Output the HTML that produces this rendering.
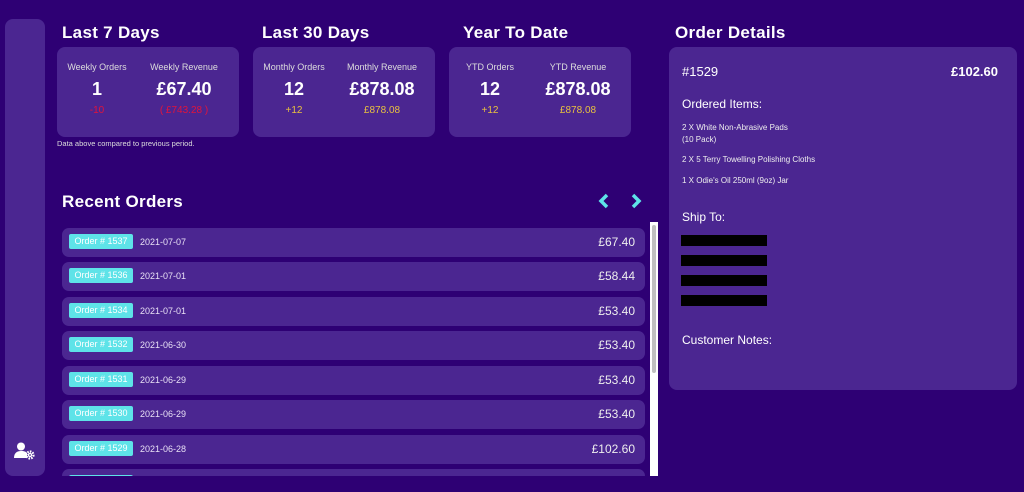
<!DOCTYPE html>
<html><head><style>
*{margin:0;padding:0;box-sizing:border-box}
body{width:1024px;height:492px;background:#2e0074;font-family:"Liberation Sans",sans-serif;color:#fff;position:relative;overflow:hidden}
.a{position:absolute}
.card{background:#4b2691;border-radius:8px}
h2{position:absolute;font-size:17px;font-weight:bold;letter-spacing:0.3px}
.lbl{font-size:9px;color:#ddd;text-align:center;position:absolute;width:90px}
.big{font-size:18px;font-weight:bold;text-align:center;position:absolute;width:90px}
.sub{font-size:10px;text-align:center;position:absolute;width:90px}
.row{position:absolute;left:62px;width:583px;height:29px;background:#4b2691;border-radius:7px}
.badge{position:absolute;left:7px;top:6px;width:64px;height:15px;background:#5ee3e8;border-radius:2px;font-size:9px;color:#fff;text-align:center;line-height:15px}
.date{position:absolute;left:78px;top:9px;font-size:9px;color:#e8e0f5}
.amt{position:absolute;right:10px;top:7px;font-size:12px;color:#eee}
.blk{position:absolute;left:681px;width:86px;height:11px;background:#000}
</style></head><body>
<div class="a card" style="left:5px;top:19px;width:40px;height:457px"></div>
<svg class="a" style="left:14px;top:442px" width="22" height="18" viewBox="0 0 22 18"><circle cx="7" cy="4.5" r="4" fill="#fff"/><path d="M0 16c0-5 3-7 7-7s5 1 6 2v5z" fill="#fff"/><circle cx="16" cy="13" r="3.5" fill="none" stroke="#fff" stroke-width="2.2" stroke-dasharray="1.6 1.1"/><circle cx="16" cy="13" r="2.2" fill="#fff"/><circle cx="16" cy="13" r="0.9" fill="#4b2691"/></svg>

<h2 style="left:62px;top:23px">Last 7 Days</h2>
<h2 style="left:262px;top:23px">Last 30 Days</h2>
<h2 style="left:463px;top:23px">Year To Date</h2>
<h2 style="left:675px;top:23px">Order Details</h2>

<div class="a card" style="left:57px;top:47px;width:182px;height:90px">
<div class="lbl" style="left:-5px;top:15px">Weekly Orders</div><div class="lbl" style="left:82px;top:15px">Weekly Revenue</div>
<div class="big" style="left:-5px;top:32px">1</div><div class="big" style="left:82px;top:32px">£67.40</div>
<div class="sub" style="left:-5px;top:58px;color:#e0143c">-10</div><div class="sub" style="left:82px;top:58px;color:#e0143c">( £743.28 )</div>
</div>
<div class="a" style="left:57px;top:139px;font-size:7.5px;color:#ddd">Data above compared to previous period.</div>
<div class="a card" style="left:253px;top:47px;width:182px;height:90px">
<div class="lbl" style="left:-4px;top:15px">Monthly Orders</div><div class="lbl" style="left:84px;top:15px">Monthly Revenue</div>
<div class="big" style="left:-4px;top:32px">12</div><div class="big" style="left:84px;top:32px">£878.08</div>
<div class="sub" style="left:-4px;top:58px;color:#e8c040">+12</div><div class="sub" style="left:84px;top:58px;color:#e8c040">£878.08</div>
</div>
<div class="a card" style="left:449px;top:47px;width:182px;height:90px">
<div class="lbl" style="left:-4px;top:15px">YTD Orders</div><div class="lbl" style="left:84px;top:15px">YTD Revenue</div>
<div class="big" style="left:-4px;top:32px">12</div><div class="big" style="left:84px;top:32px">£878.08</div>
<div class="sub" style="left:-4px;top:58px;color:#e8c040">+12</div><div class="sub" style="left:84px;top:58px;color:#e8c040">£878.08</div>
</div>

<h2 style="left:62px;top:192px">Recent Orders</h2>
<svg class="a" style="left:596px;top:192px" width="48" height="18" viewBox="0 0 48 18"><path d="M11 3l-6 6 6 6" fill="none" stroke="#5ee3e8" stroke-width="3.5"/><path d="M37 3l6 6-6 6" fill="none" stroke="#5ee3e8" stroke-width="3.5"/></svg>

<div class="row" style="top:228px"><div class="badge">Order # 1537</div><div class="date">2021-07-07</div><div class="amt">£67.40</div></div>
<div class="row" style="top:262px"><div class="badge">Order # 1536</div><div class="date">2021-07-01</div><div class="amt">£58.44</div></div>
<div class="row" style="top:297px"><div class="badge">Order # 1534</div><div class="date">2021-07-01</div><div class="amt">£53.40</div></div>
<div class="row" style="top:331px"><div class="badge">Order # 1532</div><div class="date">2021-06-30</div><div class="amt">£53.40</div></div>
<div class="row" style="top:366px"><div class="badge">Order # 1531</div><div class="date">2021-06-29</div><div class="amt">£53.40</div></div>
<div class="row" style="top:400px"><div class="badge">Order # 1530</div><div class="date">2021-06-29</div><div class="amt">£53.40</div></div>
<div class="row" style="top:435px"><div class="badge">Order # 1529</div><div class="date">2021-06-28</div><div class="amt">£102.60</div></div>
<div class="row" style="top:469px;height:7px;overflow:hidden;border-radius:7px 7px 0 0"><div class="badge" style="top:6px"></div></div>
<div class="a" style="left:0;top:476px;width:1024px;height:16px;background:#2e0074"></div>
<div class="a" style="left:650px;top:222px;width:8px;height:254px;background:#fff"></div>
<div class="a" style="left:652px;top:225px;width:4px;height:148px;background:#c0c0c0;border-radius:2px"></div>

<div class="a card" style="left:669px;top:47px;width:348px;height:343px"></div>
<div class="a" style="left:682px;top:64px;font-size:13px">#1529</div>
<div class="a" style="left:951px;top:64px;font-size:13px;font-weight:bold">£102.60</div>
<div class="a" style="left:682px;top:97px;font-size:12px">Ordered Items:</div>
<div class="a" style="left:682px;top:122px;font-size:8px;line-height:12px;color:#eee">2 X White Non-Abrasive Pads<br>(10 Pack)</div>
<div class="a" style="left:682px;top:155px;font-size:8px;color:#eee">2 X 5 Terry Towelling Polishing Cloths</div>
<div class="a" style="left:682px;top:176px;font-size:8px;color:#eee">1 X Odie's Oil 250ml (9oz) Jar</div>
<div class="a" style="left:682px;top:210px;font-size:12px">Ship To:</div>
<div class="blk" style="top:235px"></div><div class="blk" style="top:255px"></div><div class="blk" style="top:275px"></div><div class="blk" style="top:295px"></div>
<div class="a" style="left:682px;top:333px;font-size:12px">Customer Notes:</div>
</body></html>
